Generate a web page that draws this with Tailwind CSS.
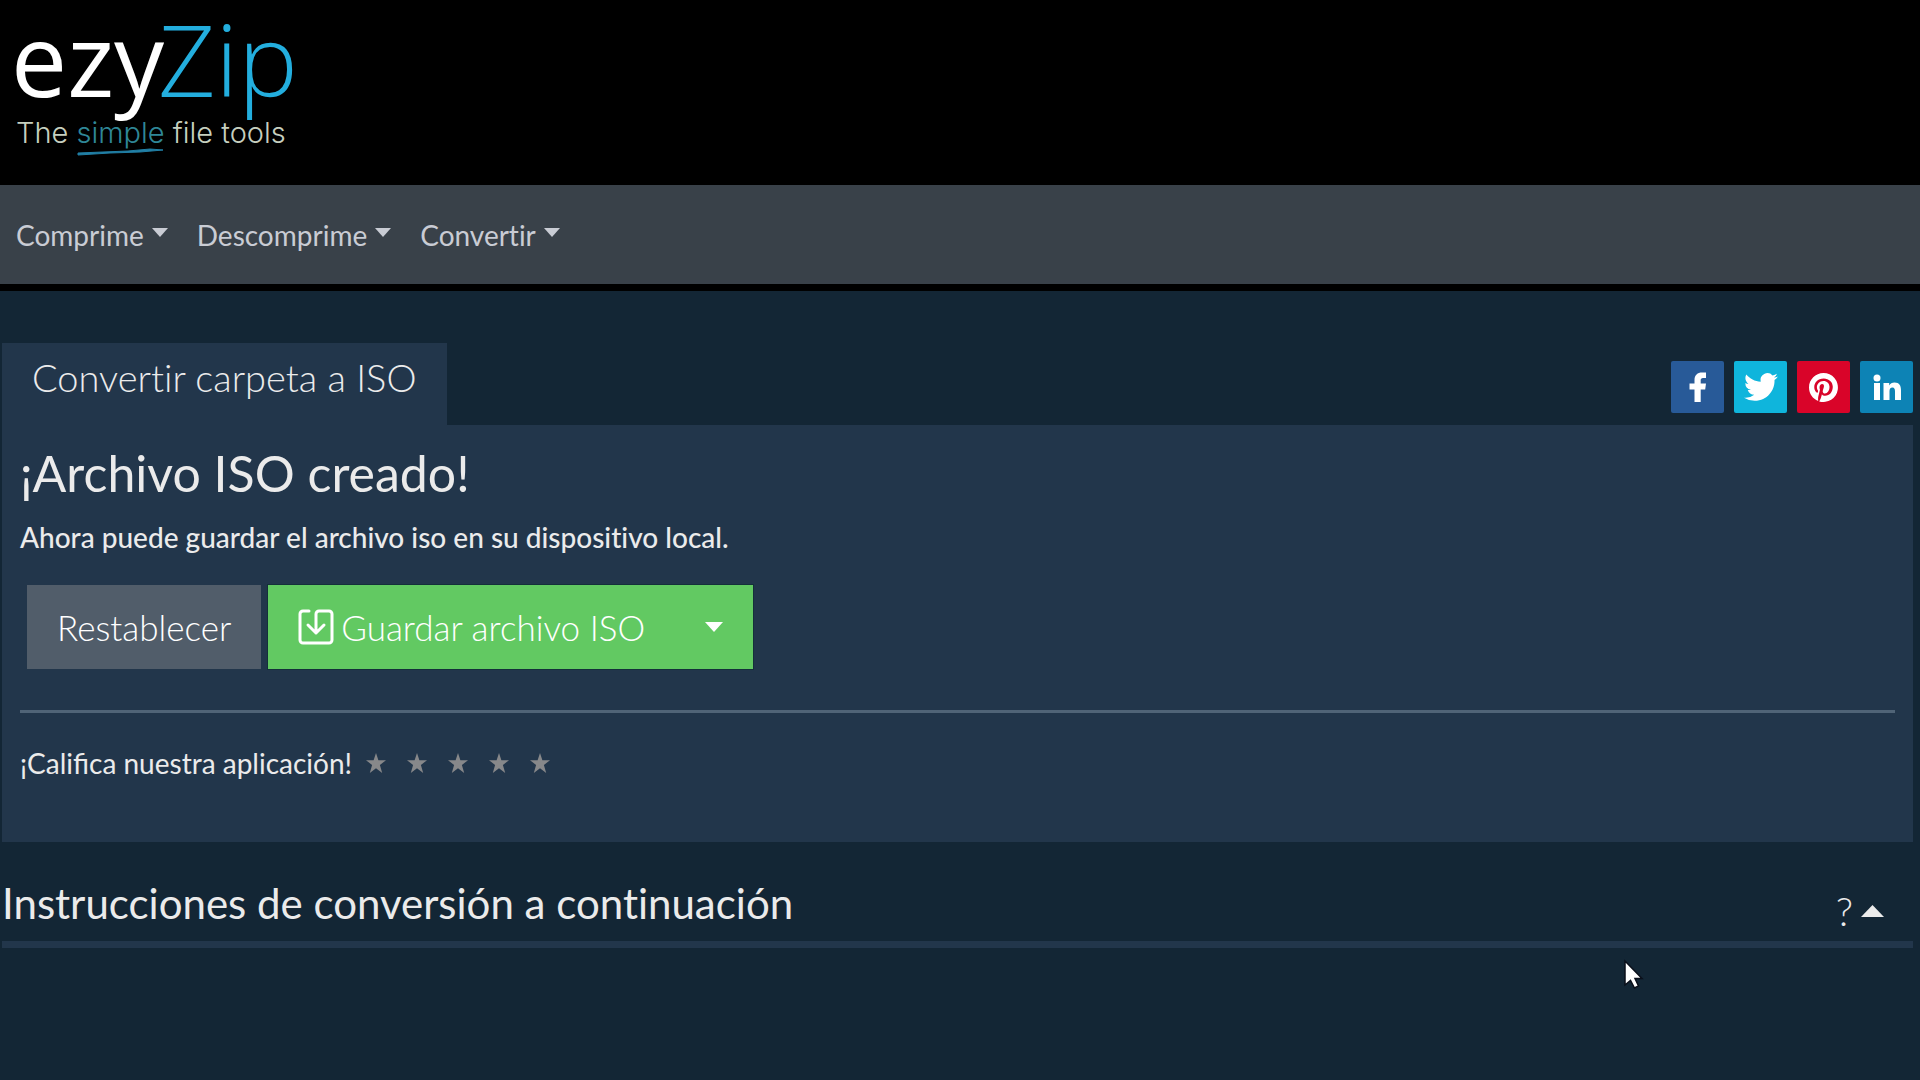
<!DOCTYPE html>
<html lang="es">
<head>
    <meta charset="UTF-8">
    <meta name="viewport" content="width=device-width, initial-scale=1.0">
    <title>ezyZip: Convertir carpeta a ISO</title>
    <script src="https://cdn.jsdelivr.net/npm/@tailwindcss/browser@4"></script>
</head>
<body class="bg-[#132635] text-[#ebebeb] font-['Lato',sans-serif] [font-variant-ligatures:none] min-h-screen">
    <!-- Logo -->
    <header class="bg-black h-[185px]">
        <a href="#" class="inline-block" aria-label="ezyZip">
            <svg class="overflow-visible" width="320" height="185" viewBox="0 0 320 185">
                <text x="11" y="97" font-size="100" font-family="Open Sans, sans-serif" fill="#fff">ezy</text>
                <text x="158" y="97" font-size="100" font-weight="300" font-family="Open Sans, sans-serif" fill="#23aede">Zip</text>
                <text x="16" y="143" font-size="29" font-weight="300" font-family="Inter, sans-serif" fill="#c6cfbf">The <tspan fill="#2f8797">simple</tspan> file tools</text>
                <path d="M78 153 L128 151 L150 149 L163 150 L140 152 L110 153 L78 155 Z" fill="#217fa5" stroke="#217fa5" stroke-width="1"/>
            </svg>
        </a>
    </header>

    <!-- Navbar -->
    <nav class="bg-[#394149] border-b-[7px] border-black h-[106px] flex items-center gap-[29px] px-4 text-[28px] text-[#c9ccd4]">
        <a href="#" class="flex items-center gap-2">Comprime
            <svg class="w-4 h-[9px] mb-1" viewBox="0 0 16 9" fill="currentColor"><path d="M0 0h16L8 9z"/></svg>
        </a>
        <a href="#" class="flex items-center gap-2">Descomprime
            <svg class="w-4 h-[9px] mb-1" viewBox="0 0 16 9" fill="currentColor"><path d="M0 0h16L8 9z"/></svg>
        </a>
        <a href="#" class="flex items-center gap-2">Convertir
            <svg class="w-4 h-[9px] mb-1" viewBox="0 0 16 9" fill="currentColor"><path d="M0 0h16L8 9z"/></svg>
        </a>
    </nav>

    <main class="pt-[52px] pl-[2px] pr-[7px]">
        <div class="flex justify-between">
            <h1 class="bg-[#22364b] h-[82px] px-[30px] pt-[10px] text-[38px] leading-[48px] font-light">Convertir carpeta a ISO</h1>
            <div class="flex gap-[10px] pt-[18px]">
                <a href="#" aria-label="Facebook" class="w-[53px] h-[52px] rounded-xs bg-[#285a98] flex items-center justify-center">
                    <svg class="w-8 h-8" viewBox="0 0 32 32" fill="#fff"><path d="M12.500 31V18.500H7.500v-6h5V9c0-5 3-7.500 7.500-7.500H24v5.500h-3c-1.700 0-2.300 1-2.300 2.200v3.300H24l-.8 6h-4.500V31z"/></svg>
                </a>
                <a href="#" aria-label="Twitter" class="w-[53px] h-[52px] rounded-xs bg-[#0fb5dc] flex items-center justify-center">
                    <svg class="w-[34px] h-[34px]" viewBox="0 0 24 24" fill="#fff"><path d="M23.950 4.570a10 10 0 0 1-2.820.770 4.960 4.960 0 0 0 2.160-2.720c-.950.550-2 .960-3.130 1.180a4.920 4.920 0 0 0-8.380 4.490C7.690 8.090 4.070 6.130 1.640 3.160a4.820 4.820 0 0 0-.670 2.470c0 1.710.870 3.210 2.190 4.100a4.900 4.900 0 0 1-2.230-.620v.060a4.920 4.920 0 0 0 3.950 4.830 5 5 0 0 1-2.210.080 4.940 4.940 0 0 0 4.600 3.420A9.870 9.870 0 0 1 0 19.540a14 14 0 0 0 7.550 2.210c9.050 0 14-7.500 14-13.980 0-.210 0-.420-.020-.630a9.940 9.940 0 0 0 2.420-2.570z"/></svg>
                </a>
                <a href="#" aria-label="Pinterest" class="w-[53px] h-[52px] rounded-xs bg-[#d90429] flex items-center justify-center">
                    <svg class="w-[29px] h-[29px]" viewBox="0 0 24 24" fill="#fff"><path d="M12 0C5.370 0 0 5.370 0 12c0 5.080 3.160 9.420 7.620 11.170-.100-.950-.200-2.410.040-3.440.220-.940 1.410-5.960 1.410-5.960s-.360-.720-.360-1.780c0-1.660.970-2.910 2.170-2.910 1.020 0 1.520.770 1.520 1.690 0 1.030-.650 2.570-.990 3.990-.290 1.190.600 2.170 1.780 2.170 2.130 0 3.770-2.250 3.770-5.490 0-2.860-2.060-4.870-5.010-4.870-3.410 0-5.410 2.560-5.410 5.200 0 1.030.390 2.140.890 2.740.100.120.110.220.080.350-.090.370-.290 1.200-.330 1.360-.050.220-.170.270-.400.160-1.500-.690-2.430-2.880-2.430-4.650 0-3.780 2.750-7.250 7.930-7.250 4.160 0 7.400 2.960 7.400 6.930 0 4.130-2.610 7.460-6.230 7.460-1.210 0-2.360-.630-2.750-1.380l-.750 2.850c-.270 1.050-1 2.350-1.490 3.150A12 12 0 1 0 12 0z"/></svg>
                </a>
                <a href="#" aria-label="LinkedIn" class="w-[53px] h-[52px] rounded-xs bg-[#0d83b5] flex items-center justify-center">
                    <svg class="w-7 h-7" viewBox="0 0 28 28" fill="#fff"><circle cx="4" cy="5" r="3.500"/><path d="M1 10h6v17H1zM10.500 10h5.700v2.400c1-1.700 2.800-2.800 5.300-2.800 5 0 6.500 3.200 6.500 8V27h-6v-8.500c0-2.200-.5-3.900-2.600-3.900-2.100 0-2.900 1.600-2.900 3.900V27h-6z"/></svg>
                </a>
            </div>
        </div>

        <!-- Result panel -->
        <section class="bg-[#22364b] h-[417px] px-[18px] pt-[18px]">
            <h2 class="text-[50px] leading-[60px]">¡Archivo ISO creado!</h2>
            <p class="mt-[14px] text-[28px] leading-10 font-medium">Ahora puede guardar el archivo iso en su dispositivo local.</p>
            <div class="flex gap-[7px] mt-7 pl-[7px] h-[84px] text-[35px] font-light text-white">
                <button type="button" class="bg-[#515d6a] px-[30px]">Restablecer</button>
                <div class="flex bg-[#62c962] outline outline-[#14303a]">
                    <button type="button" class="flex items-center gap-[7px] px-[30px]">
                        <svg class="w-9 h-9" viewBox="0 0 36 36" fill="none" stroke="#fff" stroke-width="3" stroke-linecap="round" stroke-linejoin="round"><path d="M11 2H5a3 3 0 0 0-3 3v26a3 3 0 0 0 3 3h26a3 3 0 0 0 3-3V5a3 3 0 0 0-3-3H21a3 3 0 0 0-3 3v19M10 16l8 8 8-8"/></svg>
                        Guardar archivo ISO
                    </button>
                    <button type="button" aria-label="Más opciones" class="px-[30px]">
                        <svg class="w-[18px] h-[10px]" viewBox="0 0 18 10" fill="#fff"><path d="M0 0h18l-9 10z"/></svg>
                    </button>
                </div>
            </div>
            <hr class="mt-[41px] border-t-[3px] border-[#506477]">
            <div class="flex items-center gap-[14px] mt-[30px] text-[28px] leading-10">
                <span class="[font-variant-ligatures:normal]">¡Califica nuestra aplicación!</span>
                <div class="flex gap-[21px] text-[#87888a]">
                    <button type="button" aria-label="1 estrella"><svg class="w-5 h-5" viewBox="0 0 20 20" fill="currentColor"><path d="M10 0l2.400 7.300H20l-6.100 4.600L16.200 20 10 15.300 3.800 20l2.300-8.100L0 7.300h7.600z"/></svg></button>
                    <button type="button" aria-label="2 estrellas"><svg class="w-5 h-5" viewBox="0 0 20 20" fill="currentColor"><path d="M10 0l2.400 7.300H20l-6.100 4.600L16.200 20 10 15.300 3.800 20l2.300-8.100L0 7.300h7.600z"/></svg></button>
                    <button type="button" aria-label="3 estrellas"><svg class="w-5 h-5" viewBox="0 0 20 20" fill="currentColor"><path d="M10 0l2.400 7.300H20l-6.100 4.600L16.200 20 10 15.300 3.800 20l2.300-8.100L0 7.300h7.600z"/></svg></button>
                    <button type="button" aria-label="4 estrellas"><svg class="w-5 h-5" viewBox="0 0 20 20" fill="currentColor"><path d="M10 0l2.400 7.300H20l-6.100 4.600L16.200 20 10 15.300 3.800 20l2.300-8.100L0 7.300h7.600z"/></svg></button>
                    <button type="button" aria-label="5 estrellas"><svg class="w-5 h-5" viewBox="0 0 20 20" fill="currentColor"><path d="M10 0l2.400 7.300H20l-6.100 4.600L16.200 20 10 15.300 3.800 20l2.300-8.100L0 7.300h7.600z"/></svg></button>
                </div>
            </div>
        </section>

        <!-- Instructions -->
        <section class="h-[106px] border-b-[7px] border-[#22364b] flex justify-between items-start pt-[31px] pr-[29px]">
            <h2 class="text-[42px] leading-[60px]">Instrucciones de conversión a continuación</h2>
            <button type="button" aria-label="Mostrar ayuda" class="flex items-center gap-2 mt-[10px] text-[40px] leading-[56px] font-light">
                ?
                <svg class="w-[23px] h-3" viewBox="0 0 23 12" fill="currentColor"><path d="M0 12h23L11.500 0z"/></svg>
            </button>
        </section>
    </main>

    <!-- Pointer -->
    <svg class="absolute left-[1622px] top-[959px] w-6 h-8" viewBox="0 0 24 32" fill="#fff" stroke="#0a0f1a" stroke-width="1.500"><path d="M3 2v24l5.500-4.500 4 7.500 4-2-3.500-7.500H20z"/></svg>
</body>
</html>
